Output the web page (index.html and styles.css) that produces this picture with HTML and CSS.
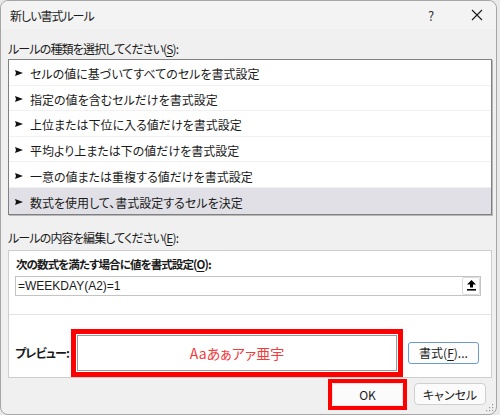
FILE: index.html
```html
<!DOCTYPE html>
<html lang="ja">
<head>
<meta charset="utf-8">
<title>新しい書式ルール</title>
<link rel="stylesheet" href="styles.css">
</head>
<body>
<div class="dialog">
  <div class="titlebar">
    <span class="title">新しい書式ルール</span>
    <span class="help">?</span>
    <span class="close"><svg width="12" height="12" viewBox="0 0 12 12"><path d="M1 1 L11 11 M11 1 L1 11" stroke="#1a1a1a" stroke-width="1.1" fill="none"/></svg></span>
  </div>
  <div class="body">
    <div class="label l1">ルールの種類を選択してください(<u>S</u>):</div>
    <ul class="list">
      <li><svg class="arr" width="8" height="6" viewBox="0 0 8 6"><polygon points="0,0 8,3 0,6 1,3"/></svg><span>セルの値に基づいてすべてのセルを書式設定</span></li>
      <li><svg class="arr" width="8" height="6" viewBox="0 0 8 6"><polygon points="0,0 8,3 0,6 1,3"/></svg><span>指定の値を含むセルだけを書式設定</span></li>
      <li><svg class="arr" width="8" height="6" viewBox="0 0 8 6"><polygon points="0,0 8,3 0,6 1,3"/></svg><span>上位または下位に入る値だけを書式設定</span></li>
      <li><svg class="arr" width="8" height="6" viewBox="0 0 8 6"><polygon points="0,0 8,3 0,6 1,3"/></svg><span>平均より上または下の値だけを書式設定</span></li>
      <li><svg class="arr" width="8" height="6" viewBox="0 0 8 6"><polygon points="0,0 8,3 0,6 1,3"/></svg><span>一意の値または重複する値だけを書式設定</span></li>
      <li class="sel"><svg class="arr" width="8" height="6" viewBox="0 0 8 6"><polygon points="0,0 8,3 0,6 1,3"/></svg><span>数式を使用して、書式設定するセルを決定</span></li>
    </ul>
    <div class="label l2">ルールの内容を編集してください(<u>E</u>):</div>
    <div class="panel">
      <div class="panel-top">
        <div class="bold cond">次の数式を満たす場合に値を書式設定(<u>O</u>):</div>
        <div class="input">
          <span class="formula">=WEEKDAY(A2)=1</span>
          <span class="collapse"><svg width="9" height="11" viewBox="0 0 9 11"><polygon points="4.5,0 9,4.5 6,4.5 6,7.5 3,7.5 3,4.5 0,4.5" fill="#000"/><rect x="0" y="9" width="9" height="1.6" fill="#000"/></svg></span>
        </div>
      </div>
      <div class="panel-preview">
        <div class="bold plabel">プレビュー:</div>
        <div class="hl hl-preview"><div class="preview">Aaあぁアァ亜宇</div></div>
        <button class="btn fmt">書式(<u>F</u>)...</button>
      </div>
    </div>
    <div class="footer">
      <div class="hl hl-ok"><button class="btn ok">OK</button></div>
      <button class="btn cancel">キャンセル</button>
    </div>
  </div>
  <svg class="grip" width="8" height="8" viewBox="0 0 8 8"><g fill="#9a9a9a"><rect x="6" y="0" width="1.2" height="1.2"/><rect x="3" y="3" width="1.2" height="1.2"/><rect x="6" y="3" width="1.2" height="1.2"/><rect x="0" y="6" width="1.2" height="1.2"/><rect x="3" y="6" width="1.2" height="1.2"/><rect x="6" y="6" width="1.2" height="1.2"/></g></svg>
</div>
</body>
</html>
```

FILE: styles.css
```css
* { box-sizing: border-box; }
html, body { margin: 0; padding: 0; }
body {
  width: 500px;
  height: 415px;
  background: #e9e9e9;
  font-family: "Noto Sans CJK JP", "Noto Sans", sans-serif;
  font-size: 12px;
  color: #1a1a1a;
  font-feature-settings: "palt";
  overflow: hidden;
}
u { text-decoration: underline; text-underline-offset: 2px; }

.dialog {
  position: relative;
  width: 497px;
  height: 415px;
  border: 1px solid #a6a6a6;
  border-radius: 8px;
  background: #f0f0f0;
  display: flex;
  flex-direction: column;
}
.titlebar {
  height: 28px;
  background: #f3f3f3;
  border-radius: 8px 8px 0 0;
  display: flex;
  align-items: center;
  padding-left: 9px;
}
.title { font-size: 12px; flex: 1; letter-spacing: -1px; }
.help { width: 12px; text-align: center; margin-right: 34px; font-size: 13px; color: #333; }
.close { width: 12px; height: 12px; display: flex; margin-right: 13px; }

.body {
  padding: 12px 4px 0 7px;
  display: flex;
  flex-direction: column;
}
.label { line-height: 16px; height: 16px; letter-spacing: -0.85px; }
.l1 { margin-bottom: 2px; }
.l2 { margin-top: 15px; margin-bottom: 4px; }

.list {
  list-style: none;
  margin: 0;
  padding: 0;
  width: 484px;
  background: #fff;
  border: 1px solid #808080;
  box-shadow: 1px 1px 0 #b8b8b8;
}
.list li {
  height: 25.6px;
  display: flex;
  align-items: center;
  padding-left: 6px;
  padding-top: 3px;
  border-bottom: 1px solid #f1f1f1;
}
.list li.sel { background: #e0e0e6; border-bottom: none; }
.arr { fill: #111; margin-right: 7px; flex: none; margin-top: -1px; }

.panel {
  width: 484px;
  background: #fff;
  border: 1px solid #cdcdcd;
  display: flex;
  flex-direction: column;
}
.panel-top {
  padding: 5px 10px 18px 6px;
  border-bottom: 1px solid #e3e3e3;
}
.bold { font-weight: bold; line-height: 16px; white-space: nowrap; }
.cond { padding-left: 1px; margin-bottom: 4px; font-size: 11.5px; letter-spacing: -0.9px; }
.input {
  height: 20px;
  border: 1px solid #c4c4c4;
  display: flex;
  align-items: center;
  justify-content: space-between;
  padding: 0 0 0 2px;
}
.formula {
  font-family: "Liberation Sans", Arial, sans-serif;
  font-size: 12px;
  font-feature-settings: normal;
  letter-spacing: 0;
}
.collapse {
  width: 18px;
  height: 18px;
  border: 1px solid #dadada;
  border-radius: 2px;
  background: #fff;
  display: flex;
  align-items: center;
  justify-content: center;
}

.panel-preview {
  height: 62px;
  padding: 14px 0 0 6px;
  display: flex;
  align-items: flex-start;
}
.plabel { margin-top: 16px; width: 56px; letter-spacing: -0.8px; }
.hl { border: 5px solid #ff0000; padding: 1px; background: #fff; }
.hl-preview { width: 332px; height: 48px; margin-bottom: -1px; }
.preview {
  height: 100%;
  border: 1px solid #9a9a9a;
  display: flex;
  align-items: center;
  justify-content: center;
  color: #f23c3c;
  font-size: 14px;
}
.btn {
  font-family: "Noto Sans CJK JP", "Noto Sans", sans-serif;
  font-size: 12px;
  font-feature-settings: "palt";
  color: #1a1a1a;
  padding: 0;
  display: flex;
  align-items: center;
  justify-content: center;
}
.fmt {
  margin-left: 5px;
  margin-top: 13px;
  width: 71px;
  height: 22px;
  border: 1px solid #6a9bd6;
  border-radius: 3px;
  background: #fdfdfd;
}

.footer {
  display: flex;
  align-items: center;
  padding-left: 320px;
  margin-top: 1px;
}
.hl-ok { width: 79px; height: 31px; border-width: 4px; padding: 0; }
.ok {
  width: 100%;
  height: 100%;
  border: 1px solid #e3e3e3;
  border-radius: 3px;
  background: #fbfbfb;
}
.cancel {
  margin-left: 7px;
  width: 72px;
  height: 22px;
  border: 1px solid #d0d0d0;
  border-radius: 4px;
  background: #fbfbfb;
}
.grip { position: absolute; right: 2px; bottom: 2px; }
```
